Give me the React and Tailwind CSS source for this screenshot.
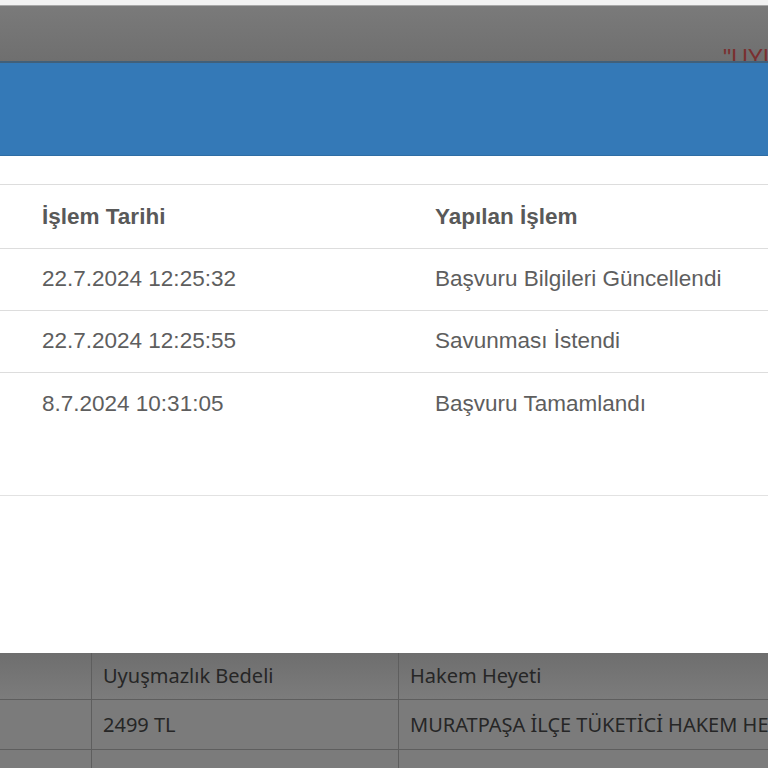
const rows = [
  { date: '22.7.2024 12:25:32', action: 'Başvuru Bilgileri Güncellendi' },
  { date: '22.7.2024 12:25:55', action: 'Savunması İstendi' },
  { date: '8.7.2024 10:31:05', action: 'Başvuru Tamamlandı' },
]

export default function App() {
  return (
    <div className="w-[768px] h-[768px] overflow-hidden bg-[#787878] flex flex-col">
      {/* page behind the overlay */}
      <div className="h-[6px] shrink-0 bg-[#f2f2f2] border-b border-[#a8a8a8]" />
      <div className="relative h-[55px] shrink-0 overflow-hidden bg-gradient-to-b from-[#7a7a7a] to-[#6f6f6f]">
        <span className="absolute left-[723px] top-[35px] text-[23px] text-[#7a2f2f] font-['Liberation_Sans',sans-serif] whitespace-nowrap">
          "UYUŞMAZLIK
        </span>
      </div>

      {/* modal */}
      <div className="shrink-0 bg-white shadow-[0_2px_6px_rgba(0,0,0,0.55)] font-['Liberation_Sans',Arial,sans-serif] text-[22.5px] text-[#5e5e5e]">
        <div className="h-[95px] bg-[#3479b7] border-t-2 border-[#41607a] border-b border-b-[#2e6da4]" />
        <div className="pt-[28px] h-[340px] border-b border-[#e2e2e2]">
          <div className="border-t border-[#dddddd]">
            <div className="flex h-[64px] items-center border-b border-[#dddddd] font-bold text-[#595959]">
              <div className="w-[435px] pl-[42px]">İşlem Tarihi</div>
              <div className="flex-1">Yapılan İşlem</div>
            </div>
            {rows.map((r, i) => (
              <div
                key={i}
                className={
                  i < rows.length - 1
                    ? 'flex h-[62px] items-center border-b border-[#dddddd]'
                    : 'flex h-[62px] items-center'
                }
              >
                <div className="w-[435px] pl-[42px] pb-[1px]">{r.date}</div>
                <div className="flex-1 pb-[1px] whitespace-nowrap">{r.action}</div>
              </div>
            ))}
          </div>
        </div>
        <div className="h-[157px]" />
      </div>

      {/* table behind the overlay */}
      <div className="flex-1 bg-[#7b7b7b] font-['Noto_Sans','Open_Sans',sans-serif] text-[20px] text-[#262626]">
        <div className="flex h-[47px] border-b border-[#5e5e5e] bg-gradient-to-b from-[#6e6e6e] to-[#7c7c7c]">
          <div className="w-[92px] border-r border-[#5e5e5e]" />
          <div className="w-[307px] border-r border-[#5e5e5e] pl-[11px] flex items-center">Uyuşmazlık Bedeli</div>
          <div className="flex-1 pl-[11px] flex items-center whitespace-nowrap">Hakem Heyeti</div>
        </div>
        <div className="flex h-[50px] border-b border-[#5e5e5e]">
          <div className="w-[92px] border-r border-[#5e5e5e]" />
          <div className="w-[307px] border-r border-[#5e5e5e] pl-[11px] flex items-center">2499 TL</div>
          <div className="flex-1 pl-[11px] flex items-center whitespace-nowrap overflow-hidden">MURATPAŞA İLÇE TÜKETİCİ HAKEM HEYETİ</div>
        </div>
        <div className="flex h-[40px]">
          <div className="w-[92px] border-r border-[#5e5e5e]" />
          <div className="w-[307px] border-r border-[#5e5e5e]" />
          <div className="flex-1" />
        </div>
      </div>
    </div>
  )
}
